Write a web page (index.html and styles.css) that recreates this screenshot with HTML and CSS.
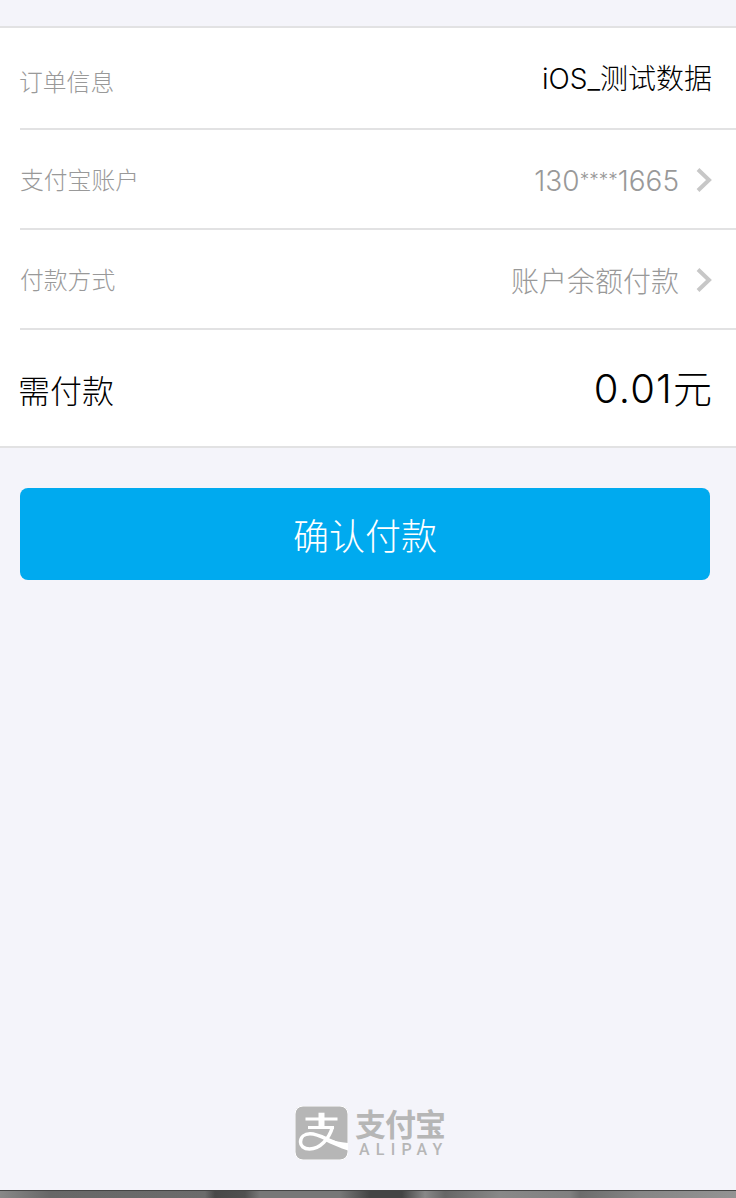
FILE: index.html
```html
<!doctype html>
<html lang="zh-CN">
<head>
	<meta charset="UTF-8">
	<title>确认付款</title>
	<link rel="stylesheet" href="styles.css">
</head>
<body>
	<div class="page">
		<ul class="list">
			<li class="row order">
				<span class="label">订单信息</span>
				<span class="value"><span class="latin">iOS_</span>测试数据</span>
			</li>
			<li class="row">
				<span class="label">支付宝账户</span>
				<span class="value num">130<span class="stars">****</span>1665</span>
				<svg class="arrow" viewBox="0 0 16 26"><path d="M2 2.500L13 13L2 23.500"/></svg>
			</li>
			<li class="row">
				<span class="label">付款方式</span>
				<span class="value">账户余额付款</span>
				<svg class="arrow" viewBox="0 0 16 26"><path d="M2 2.500L13 13L2 23.500"/></svg>
			</li>
			<li class="row total">
				<span class="label">需付款</span>
				<span class="value"><span class="latin">0.01</span>元</span>
			</li>
		</ul>
		<button class="pay" type="button">确认付款</button>
		<div class="logo">
			<svg class="mark" viewBox="0 0 53 54">
				<rect width="53" height="54" rx="8" fill="#b6b6b6"/>
				<path class="bar" d="M10.500 13H42.500M13 21.500H39"/>
				<path class="stem" d="M26.500 6.700V22"/>
				<path class="swash" d="M37.500 21C34 33 25 43 14.500 43C8.500 43 5.500 39.500 5.500 36C5.500 31 9.500 27.800 15 27.800C24 27.800 32 34 42 37.500"/>
				<path class="tail" d="M30 31.500C37 34.500 45 36.500 53 37V44.500C45 42 37 38.500 29 34.500Z"/>
			</svg>
			<div class="words">
				<span class="cn">支付宝</span>
				<span class="en">ALIPAY</span>
			</div>
		</div>
		<div class="strip"></div>
	</div>
</body>
</html>
```
FILE: styles.css
```css
*{
	margin: 0;
	padding: 0;
	list-style: none;
	box-sizing: border-box;
}
body{
	background: #f4f4fa;
	font-family: "Noto Sans CJK SC", sans-serif;
	font-weight: 300;
}
.page{
	height: 1198px;
	padding-top: 26px;
	display: flex;
	flex-direction: column;
	overflow: hidden;
}
.list{
	background: #fff;
	border-top: 2px solid #e2e2e3;
	border-bottom: 2px solid #e2e2e3;
	padding-left: 20px;
}
.row{
	height: 100px;
	display: flex;
	align-items: center;
	padding-top: 2px;
	padding-right: 24px;
	border-bottom: 2px solid #e2e2e3;
	color: #999;
	white-space: nowrap;
}
.label{
	flex: 1;
	font-size: 23.8px;
	line-height: 36px;
	padding-bottom: 2px;
}
.value{
	font-size: 28px;
	line-height: 40px;
}
.latin,
.num{
	font-family: Inter, "Liberation Sans", sans-serif;
}
.num{
	padding-top: 2px;
}
.stars{
	font-size: 19px;
	line-height: 1;
	vertical-align: 5px;
}
.arrow{
	width: 16px;
	height: 26px;
	margin-left: 17px;
	fill: none;
	stroke: #c7c7c7;
	stroke-width: 4;
}
.order{
	height: 102px;
	padding-top: 0;
}
.order .label{
	margin-left: -1px;
	padding-top: 7px;
}
.order .value{
	color: #000;
}
.total{
	height: 116px;
	padding-top: 0;
	border-bottom: 0;
	color: #000;
}
.total .label{
	margin-left: -2px;
	padding-top: 4px;
	font-size: 32px;
}
.total .value{
	padding-bottom: 2px;
	font-size: 39px;
}
.total .latin{
	font-size: 40px;
	letter-spacing: 1.2px;
}
.pay{
	height: 92px;
	margin: 40px 26px 0 20px;
	border: 0;
	border-radius: 8px;
	background: #00aaef;
	color: #fff;
	font: inherit;
	font-size: 36px;
}
.logo{
	display: flex;
	justify-content: center;
	margin-top: auto;
	margin-bottom: 30px;
	padding-left: 4px;
	color: #b6b6b6;
}
.mark{
	width: 53px;
	height: 54px;
	margin-right: 7px;
	fill: none;
	stroke: #fff;
}
.bar{
	stroke-width: 3;
}
.stem{
	stroke-width: 6;
}
.swash{
	stroke-width: 3.5;
}
.tail{
	fill: #fff;
	stroke: none;
}
.words{
	width: 90px;
	display: flex;
	flex-direction: column;
}
.cn{
	font-size: 31px;
	font-weight: 700;
	line-height: 34px;
	letter-spacing: -1px;
}
.en{
	font-family: Roboto, sans-serif;
	font-size: 16px;
	font-weight: 500;
	line-height: 20px;
	letter-spacing: 6.2px;
	padding-left: 4px;
}
.strip{
	height: 8px;
	border-top: 1px solid #444;
	background: linear-gradient(90deg, #888 0, #676767 50px, #6b6b6b 205px, #484848 215px, #505050 245px, #777 260px, #777 340px, #444 370px, #444 402px, #888 425px, #666 445px, #888 500px, #808080 570px, #6c6c6c 580px, #858585 640px, #939393 736px);
}
```
